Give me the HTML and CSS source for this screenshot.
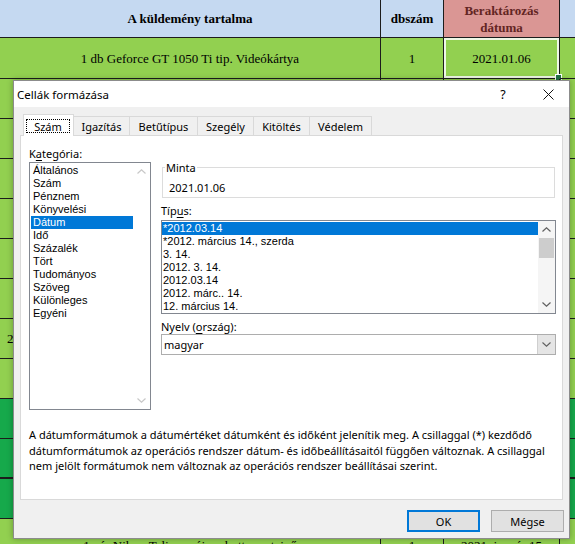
FILE: index.html
```html
<!DOCTYPE html>
<html lang="hu">
<head>
<meta charset="utf-8">
<title>Cellák formázása</title>
<link rel="stylesheet" href="styles.css">
</head>
<body>
<div class="sheet">
  <div class="row head">
    <div class="c a">A küldemény tartalma</div>
    <div class="c b">dbszám</div>
    <div class="c cc pink">Beraktározás<br>dátuma</div>
    <div class="c d"></div>
  </div>
  <div class="row r2">
    <div class="c a">1 db Geforce GT 1050 Ti tip. Videókártya</div>
    <div class="c b">1</div>
    <div class="c cc sel">2021.01.06<span class="handle"></span></div>
    <div class="c d"></div>
  </div>
  <div class="row"><div class="c a"></div><div class="c b"></div><div class="c cc"></div><div class="c d"></div></div>
  <div class="row"><div class="c a"></div><div class="c b"></div><div class="c cc"></div><div class="c d"></div></div>
  <div class="row"><div class="c a"></div><div class="c b"></div><div class="c cc"></div><div class="c d"></div></div>
  <div class="row"><div class="c a"></div><div class="c b"></div><div class="c cc"></div><div class="c d"></div></div>
  <div class="row"><div class="c a"></div><div class="c b"></div><div class="c cc"></div><div class="c d"></div></div>
  <div class="row"><div class="c a"></div><div class="c b"></div><div class="c cc"></div><div class="c d"></div></div>
  <div class="row"><div class="c a left">2</div><div class="c b"></div><div class="c cc"></div><div class="c d"></div></div>
  <div class="row"><div class="c a"></div><div class="c b"></div><div class="c cc"></div><div class="c d"></div></div>
  <div class="row dark"><div class="c a"></div><div class="c b"></div><div class="c cc"></div><div class="c d"></div></div>
  <div class="row dark thick"><div class="c a"></div><div class="c b"></div><div class="c cc"></div><div class="c d"></div></div>
  <div class="row dark"><div class="c a"></div><div class="c b"></div><div class="c cc"></div><div class="c d"></div></div>
  <div class="row last"><div class="c a"><span class="peek">1 pár Nike - Teljesen új szabott sportcipő</span></div><div class="c b"><span class="peek">1</span></div><div class="c cc"><span class="peek">2021. január 15</span></div><div class="c d"></div></div>
</div>

<div class="dialog">
  <div class="titlebar">
    <div class="title">Cellák formázása</div>
    <div class="help">?</div>
    <div class="close">
      <svg width="11" height="11" viewBox="0 0 11 11"><path d="M0.5 0.5 L10.5 10.5 M10.5 0.5 L0.5 10.5" stroke="#111" stroke-width="1" fill="none"/></svg>
    </div>
  </div>
  <div class="dbody">
    <div class="tabs">
      <div class="tab active w1"><span class="focus">Szám</span></div>
      <div class="tab w2">Igazítás</div>
      <div class="tab w3">Betűtípus</div>
      <div class="tab w4">Szegély</div>
      <div class="tab w5">Kitöltés</div>
      <div class="tab w6">Védelem</div>
    </div>
    <div class="panel">
      <div class="grid">
        <div class="leftcol">
          <div class="lbl">K<u>a</u>tegória:</div>
          <div class="list catlist">
            <div class="items">
              <div class="it">Általános</div>
              <div class="it">Szám</div>
              <div class="it">Pénznem</div>
              <div class="it">Könyvelési</div>
              <div class="it on">Dátum</div>
              <div class="it">Idő</div>
              <div class="it">Százalék</div>
              <div class="it">Tört</div>
              <div class="it">Tudományos</div>
              <div class="it">Szöveg</div>
              <div class="it">Különleges</div>
              <div class="it">Egyéni</div>
            </div>
            <div class="sb sb-off">
              <div class="arr"><svg width="9" height="5" viewBox="0 0 9 5"><path d="M0.5 4.5 L4.5 0.8 L8.5 4.5" stroke="#c8c8c8" stroke-width="1.2" fill="none"/></svg></div>
              <div class="track"></div>
              <div class="arr"><svg width="9" height="5" viewBox="0 0 9 5"><path d="M0.5 0.5 L4.5 4.2 L8.5 0.5" stroke="#c8c8c8" stroke-width="1.2" fill="none"/></svg></div>
            </div>
          </div>
        </div>
        <div class="rightcol">
          <fieldset class="sample">
            <legend>Minta</legend>
            <div class="sval">2021.01.06</div>
          </fieldset>
          <div class="lbl l2">Típ<u>u</u>s:</div>
          <div class="list typelist">
            <div class="items">
              <div class="it on">*2012.03.14</div>
              <div class="it">*2012. március 14., szerda</div>
              <div class="it">3. 14.</div>
              <div class="it">2012. 3. 14.</div>
              <div class="it">2012.03.14</div>
              <div class="it">2012. márc.. 14.</div>
              <div class="it">12. március 14.</div>
            </div>
            <div class="sb">
              <div class="arr"><svg width="9" height="5" viewBox="0 0 9 5"><path d="M0.5 4.5 L4.5 0.8 L8.5 4.5" stroke="#606060" stroke-width="1.2" fill="none"/></svg></div>
              <div class="track"><div class="thumb"></div></div>
              <div class="arr"><svg width="9" height="5" viewBox="0 0 9 5"><path d="M0.5 0.5 L4.5 4.2 L8.5 0.5" stroke="#606060" stroke-width="1.2" fill="none"/></svg></div>
            </div>
          </div>
          <div class="lbl l2">Nyelv (<u>o</u>rszág):</div>
          <div class="combo">
            <div class="cval">magyar</div>
            <div class="cbtn"><svg width="9" height="5" viewBox="0 0 9 5"><path d="M0.5 0.5 L4.5 4.2 L8.5 0.5" stroke="#606060" stroke-width="1.1" fill="none"/></svg></div>
          </div>
        </div>
      </div>
      <div class="desc">
        <div class="ln">A dátumformátumok a dátumértéket dátumként és időként jelenítik meg. A csillaggal (*) kezdődő</div>
        <div class="ln">dátumformátumok az operációs rendszer dátum- és időbeállításaitól függően változnak. A csillaggal</div>
        <div class="ln">nem jelölt formátumok nem változnak az operációs rendszer beállításai szerint.</div>
      </div>
    </div>
    <div class="btns">
      <button class="btn def">OK</button>
      <button class="btn">Mégse</button>
    </div>
  </div>
</div>
</body>
</html>
```

FILE: styles.css
```css
html, body {
  margin: 0;
  padding: 0;
}
body {
  width: 575px;
  height: 544px;
  overflow: hidden;
  position: relative;
  background: #92d050;
  font-family: "Liberation Serif", "Times New Roman", serif;
}

/* spreadsheet */
.sheet {
  width: 575px;
}
.row {
  display: grid;
  grid-template-columns: 381px 63px 116px 15px;
  height: 40px;
  background: #92d050;
}
.row .c {
  box-sizing: border-box;
  border-right: 1px solid #1c1c1c;
  border-bottom: 1px solid #1c1c1c;
  display: flex;
  align-items: center;
  justify-content: center;
  text-align: center;
  font-size: 13px;
  line-height: 17px;
  color: #000;
  position: relative;
  white-space: nowrap;
}
.row .d {
  border-right: none;
}
.row .left {
  justify-content: flex-start;
  padding-left: 7px;
}
.head {
  height: 38px;
  background: #c5d9f1;
}
.head .c {
  font-weight: bold;
}
.head .pink {
  background: #da9694;
  color: #632523;
}
.r2 {
  height: 41px;
}
.sel {
  box-shadow: inset 0 0 0 2px #eef7e6;
}
.handle {
  position: absolute;
  right: -3px;
  bottom: -3px;
  width: 5px;
  height: 5px;
  background: #217346;
  border: 1px solid #fff;
}
.dark {
  background: #16a94b;
}
.thick .c {
  border-bottom-width: 2px;
}
.last {
  height: 25px;
}
.last .c {
  border-bottom: none;
  align-items: flex-start;
  overflow: hidden;
}
.peek {
  display: block;
  margin-top: 18px;
}

/* dialog */
.dialog {
  position: absolute;
  left: 13px;
  top: 80px;
  width: 557px;
  height: 459px;
  box-sizing: border-box;
  border: 1px solid #8c8c8c;
  background: #f0f0f0;
  box-shadow: 0 0 6px rgba(0, 0, 0, 0.3);
  font-family: "Noto Sans", "Open Sans", sans-serif;
  font-size: 11px;
  color: #000;
}
.titlebar {
  height: 26px;
  background: #fff;
  display: flex;
  align-items: center;
  padding-right: 6px;
}
.title {
  flex: 1;
  padding-left: 3px;
  font-size: 11.5px;
}
.help {
  width: 20px;
  text-align: center;
  font-size: 12.5px;
  margin-right: 20px;
}
.close {
  width: 30px;
  display: flex;
  justify-content: center;
  align-items: center;
}
.close svg {
  display: block;
}
.dbody {
  padding: 7px 6px 0 6px;
}
.tabs {
  display: flex;
  align-items: flex-end;
  height: 21px;
  padding-left: 3px;
  position: relative;
  z-index: 1;
}
.tab {
  box-sizing: border-box;
  height: 19px;
  border: 1px solid #d9d9d9;
  border-bottom: none;
  background: #f0f0f0;
  margin-left: -1px;
  display: flex;
  align-items: center;
  justify-content: center;
  line-height: 15px;
}
.tab.active {
  height: 22px;
  margin-left: 0;
  margin-bottom: -1px;
  background: #fff;
  align-items: stretch;
  padding: 4px 3px 3px 2px;
}
.focus {
  flex: 1;
  border: 1px dotted #000;
  display: flex;
  align-items: center;
  justify-content: center;
}
.w1 { width: 51px; }
.w2 { width: 57px; }
.w3 { width: 69px; }
.w4 { width: 57px; }
.w5 { width: 57px; }
.w6 { width: 63px; }

.panel {
  height: 365px;
  box-sizing: border-box;
  border: 1px solid #d9d9d9;
  background: #fff;
  padding: 10px 6px 0 8px;
}
.grid {
  display: grid;
  grid-template-columns: 122px 395px;
  column-gap: 10px;
  align-items: start;
}
.lbl {
  line-height: 15px;
  height: 15px;
}
.lbl u {
  text-decoration-thickness: 1px;
  text-underline-offset: 2px;
}
.list {
  box-sizing: border-box;
  border: 1px solid #828790;
  background: #fff;
  display: flex;
  overflow: hidden;
}
.catlist {
  margin-top: 1px;
  height: 248px;
}
.items {
  flex: 1;
  overflow: hidden;
}
.it {
  height: 13px;
  line-height: 13px;
  white-space: nowrap;
  font-family: "Liberation Sans", Arial, sans-serif;
  font-size: 11px;
}
.it.on {
  background: #0078d7;
  color: #fff;
}
.catlist .items {
  padding: 1px 0 0 1px;
}
.catlist .it {
  padding-left: 2px;
}
.sb {
  width: 17px;
  display: flex;
  flex-direction: column;
  background: #f5f5f5;
}
.sb-off {
  background: #fff;
}
.arr {
  height: 17px;
  display: flex;
  align-items: center;
  justify-content: center;
}
.arr svg {
  display: block;
}
.track {
  flex: 1;
  padding: 0 1px;
}
.thumb {
  height: 20px;
  background: #cdcdcd;
}
.sample {
  margin: 14px 1px 0 1px;
  border: 1px solid #dcdcdc;
  padding: 5px 6px 2px 6px;
  min-width: 0;
}
.sample legend {
  padding: 0 1px;
  margin-left: -4px;
  line-height: 15px;
}
.sval {
  line-height: 15px;
}
.l2 {
  margin-top: 5px;
}
.typelist {
  margin-top: 2px;
  height: 94px;
}
.typelist .items {
  padding-top: 1px;
}
.typelist .it {
  padding-left: 1px;
}
.combo {
  box-sizing: border-box;
  height: 21px;
  border: 1px solid #adadad;
  background: #fff;
  display: flex;
}
.cval {
  flex: 1;
  line-height: 19px;
  padding-left: 2px;
}
.cbtn {
  width: 17px;
  background: #e5e5e5;
  border-left: 1px solid #cfcfcf;
  display: flex;
  align-items: center;
  justify-content: center;
}
.desc {
  margin-top: 17px;
  line-height: 15.5px;
}
.ln {
  white-space: nowrap;
}
.btns {
  display: flex;
  justify-content: flex-end;
  gap: 11px;
  padding-top: 10px;
  margin-right: -1px;
}
.btn {
  box-sizing: border-box;
  width: 73px;
  height: 22px;
  border: 1px solid #adadad;
  background: #e1e1e1;
  font-family: "Noto Sans", "Open Sans", sans-serif;
  font-size: 11px;
  color: #000;
  padding: 0;
}
.btn.def {
  border: 2px solid #0078d7;
}
```
